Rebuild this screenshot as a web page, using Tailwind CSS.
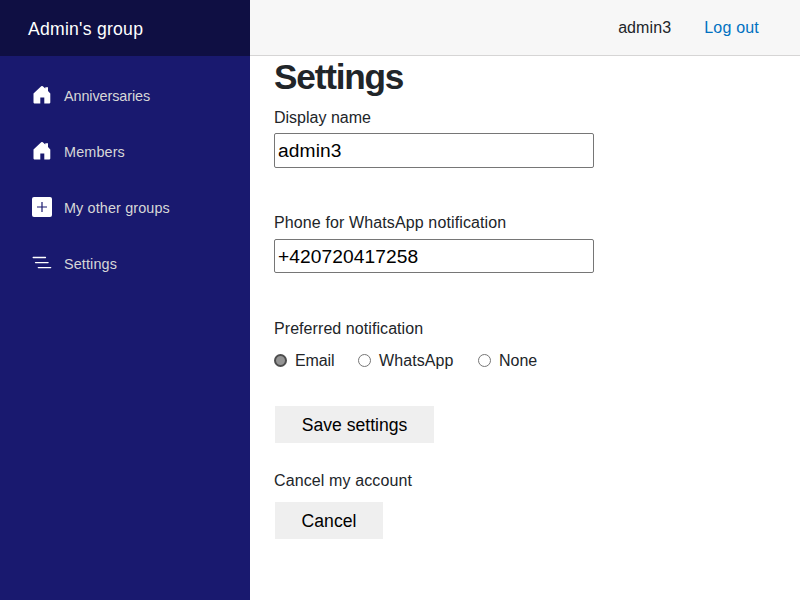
<!DOCTYPE html>
<html lang="en">
<head>
<meta charset="utf-8">
<title>Settings</title>
<script src="https://cdn.jsdelivr.net/npm/@tailwindcss/browser@4"></script>
</head>
<body class="flex h-screen overflow-hidden bg-white font-['Liberation_Sans',Arial,sans-serif] text-base leading-6 text-[#212529]">
  <aside class="w-[250px] shrink-0 bg-[#19196f]">
    <div class="flex h-14 items-center bg-[#0f0f43] pt-0.5 pl-7 text-[17.6px] tracking-[0.25px] text-white">Admin's group</div>
    <nav class="flex flex-col gap-2 pt-4 text-[14.4px] text-[#d7d7d7]">
      <a class="flex h-12 items-center pl-8">
        <svg class="mr-3 mb-0.5 h-5 w-5 text-white" viewBox="0 0 20 20" fill="currentColor"><path d="M9.2 1.2 Q10 .6 10.8 1.2 L13.3 3.5 V2.3 H16 V6 L18.3 8.5 V17.6 Q18.3 18.4 17.5 18.4 H12.3 V12.5 H8.3 V18.4 H2.3 Q1.5 18.4 1.5 17.6 V8.5 Z"/></svg>
        <span class="tracking-[-0.08px]">Anniversaries</span>
      </a>
      <a class="flex h-12 items-center pl-8">
        <svg class="mr-3 mb-0.5 h-5 w-5 text-white" viewBox="0 0 20 20" fill="currentColor"><path d="M9.2 1.2 Q10 .6 10.8 1.2 L13.3 3.5 V2.3 H16 V6 L18.3 8.5 V17.6 Q18.3 18.4 17.5 18.4 H12.3 V12.5 H8.3 V18.4 H2.3 Q1.5 18.4 1.5 17.6 V8.5 Z"/></svg>
        <span class="tracking-[0.14px]">Members</span>
      </a>
      <a class="flex h-12 items-center pl-8">
        <svg class="mr-3 mb-0.5 h-5 w-5 text-white" viewBox="0 0 20 20" fill="none"><rect width="20" height="20" rx="2" fill="currentColor"/><path d="M10 5v10M5 10h10" stroke="#19196f" stroke-width="1.2"/></svg>
        <span class="tracking-[0.13px]">My other groups</span>
      </a>
      <a class="flex h-12 items-center pl-8">
        <svg class="mr-3 mb-0.5 h-5 w-5 text-white" viewBox="0 0 20 20" fill="none" stroke="currentColor" stroke-width="1.3" stroke-linecap="round"><path d="M1.2 4.5h12.3M3.5 9.6h12.6M6.3 14.6h12.4"/></svg>
        <span class="tracking-[0.12px]">Settings</span>
      </a>
    </nav>
  </aside>
  <main class="flex-1">
    <header class="flex h-14 items-center justify-end gap-[33px] border-b border-[#d6d5d5] bg-[#f7f7f7] pr-[41px]">
      <span class="tracking-[0.1px]">admin3</span>
      <a class="tracking-[0.2px] text-[#0071c1]">Log out</a>
    </header>
    <form class="pl-6">
      <h1 class="h-[50px] text-[35.2px] leading-[42px] font-bold tracking-[-1.2px]">Settings</h1>
      <label class="block">Display name</label>
      <input class="mt-[3px] block h-[35px] w-80 rounded-xs border border-[#767676] bg-white px-[3px] text-[19.2px] tracking-[0.1px] text-black" value="admin3">
      <label class="mt-[43px] block tracking-[0.12px]">Phone for WhatsApp notification</label>
      <input class="mt-1 block h-[34px] w-80 rounded-xs border border-[#767676] bg-white px-[3px] pt-0.5 text-[19.2px] tracking-[0.08px] text-black" value="+420720417258">
      <p class="mt-11 tracking-[0.07px]">Preferred notification</p>
      <div class="mt-2 flex">
        <label class="flex w-[84px] items-center gap-2"><span class="mb-0.5 h-[13px] w-[13px] rounded-full border-[2.5px] border-[#4d4d4d] bg-[#949494]"></span><span class="tracking-[-0.1px]">Email</span></label>
        <label class="flex w-[120px] items-center gap-2"><span class="mb-0.5 h-[13px] w-[13px] rounded-full border border-[#767676] bg-white"></span><span class="tracking-[0.1px]">WhatsApp</span></label>
        <label class="flex items-center gap-2"><span class="mb-0.5 h-[13px] w-[13px] rounded-full border border-[#767676] bg-white"></span>None</label>
      </div>
      <button type="button" class="mt-[33px] ml-px block h-[37px] w-[159px] bg-[#efefef] text-[17.6px] text-black">Save settings</button>
      <p class="mt-[26px] tracking-[0.12px]">Cancel my account</p>
      <button type="button" class="mt-[9px] ml-px block h-[37px] w-[108px] bg-[#efefef] text-[17.6px] text-black">Cancel</button>
    </form>
  </main>
</body>
</html>
